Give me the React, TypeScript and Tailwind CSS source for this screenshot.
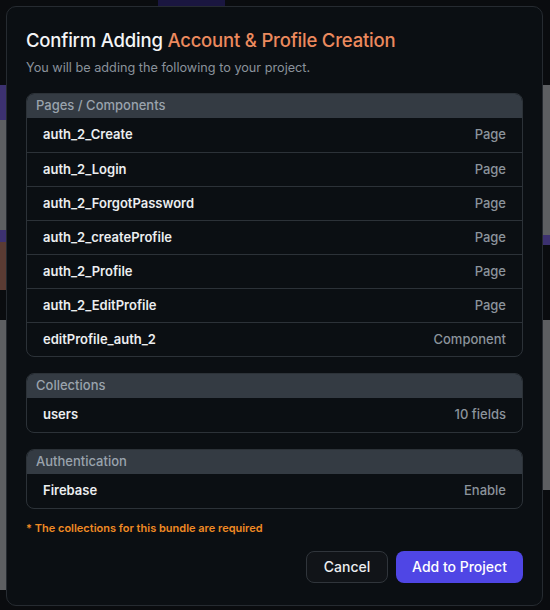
import React from 'react'

type Item = { name: string; kind: string }

const sections: { title: string; items: Item[] }[] = [
  {
    title: 'Pages / Components',
    items: [
      { name: 'auth_2_Create', kind: 'Page' },
      { name: 'auth_2_Login', kind: 'Page' },
      { name: 'auth_2_ForgotPassword', kind: 'Page' },
      { name: 'auth_2_createProfile', kind: 'Page' },
      { name: 'auth_2_Profile', kind: 'Page' },
      { name: 'auth_2_EditProfile', kind: 'Page' },
      { name: 'editProfile_auth_2', kind: 'Component' },
    ],
  },
  {
    title: 'Collections',
    items: [{ name: 'users', kind: '10 fields' }],
  },
  {
    title: 'Authentication',
    items: [{ name: 'Firebase', kind: 'Enable' }],
  },
]

function Section({ title, items }: { title: string; items: Item[] }) {
  return (
    <div className="overflow-hidden rounded-lg border border-[#2c3238]">
      <div className="flex h-[24px] items-center bg-[#343b43] px-[9px] text-[13px] font-medium text-[#9aa3ad]">
        {title}
      </div>
      {items.map((item, i) => (
        <div
          key={item.name}
          className={`flex h-[34px] items-center justify-between px-4 text-[13px] ${
            i > 0 ? 'border-t border-[#2c3238]' : ''
          }`}
        >
          <span className="font-semibold text-[#eceef0]">{item.name}</span>
          <span className="font-medium text-[#8c949c]">{item.kind}</span>
        </div>
      ))}
    </div>
  )
}

export default function App() {
  return (
    <div className="relative h-[610px] w-[550px] overflow-hidden bg-[#0a0c0f] font-['Inter',sans-serif]">
      {/* page behind the dialog, dimmed */}
      <div className="flex h-full">
        <div className="flex w-[6px] flex-col pt-[85px]">
          <div className="h-[35px] bg-[#3c3170]" />
          <div className="h-[110px] bg-[#5d5f62]" />
          <div className="h-[12px] bg-[#3c3170]" />
          <div className="h-[48px] bg-[#5a3b33]" />
          <div className="h-[30px]" />
          <div className="h-[270px] bg-[#5d5f62]" />
        </div>
        <div className="flex flex-1 items-start">
          <div className="ml-[152px] h-[6px] w-[67px] bg-[#1a1640]" />
        </div>
        <div className="flex w-[7px] flex-col pt-[85px]">
          <div className="h-[150px] bg-[#5d5f62]" />
          <div className="h-[10px] bg-[#3c3170]" />
          <div className="h-[75px] bg-[#0a0c0f]" />
          <div className="h-[170px] bg-[#5d5f62]" />
        </div>
      </div>

      {/* dialog */}
      <div className="absolute left-[6px] top-[6px] flex h-[600px] w-[537px] flex-col rounded-[10px] border border-[#262b31] bg-[#0b0f13] px-[19px] pt-[19px]">
        <h2 className="text-[18.5px] font-medium leading-7 tracking-[-0.2px] text-[#f4f5f6]">
          Confirm Adding <span className="text-[#ec8a5e]">Account &amp; Profile Creation</span>
        </h2>
        <p className="mt-[4px] text-[12.7px] leading-5 text-[#8a929b]">
          You will be adding the following to your project.
        </p>

        <div className="mt-[15px] flex flex-col gap-[16px]">
          {sections.map((s) => (
            <Section key={s.title} title={s.title} items={s.items} />
          ))}
        </div>

        <p className="mt-[11px] text-[11px] font-semibold text-[#f08a24]">
          * The collections for this bundle are required
        </p>

        <div className="mt-[14px] flex justify-end gap-2">
          <button className="h-8 w-[82px] rounded-lg border border-[#30353b] bg-[#111418] text-[14px] font-medium text-[#eceef0]">
            Cancel
          </button>
          <button className="h-8 w-[127px] rounded-lg bg-[#4f46e5] text-[14px] font-medium text-white">
            Add to Project
          </button>
        </div>
      </div>
    </div>
  )
}
